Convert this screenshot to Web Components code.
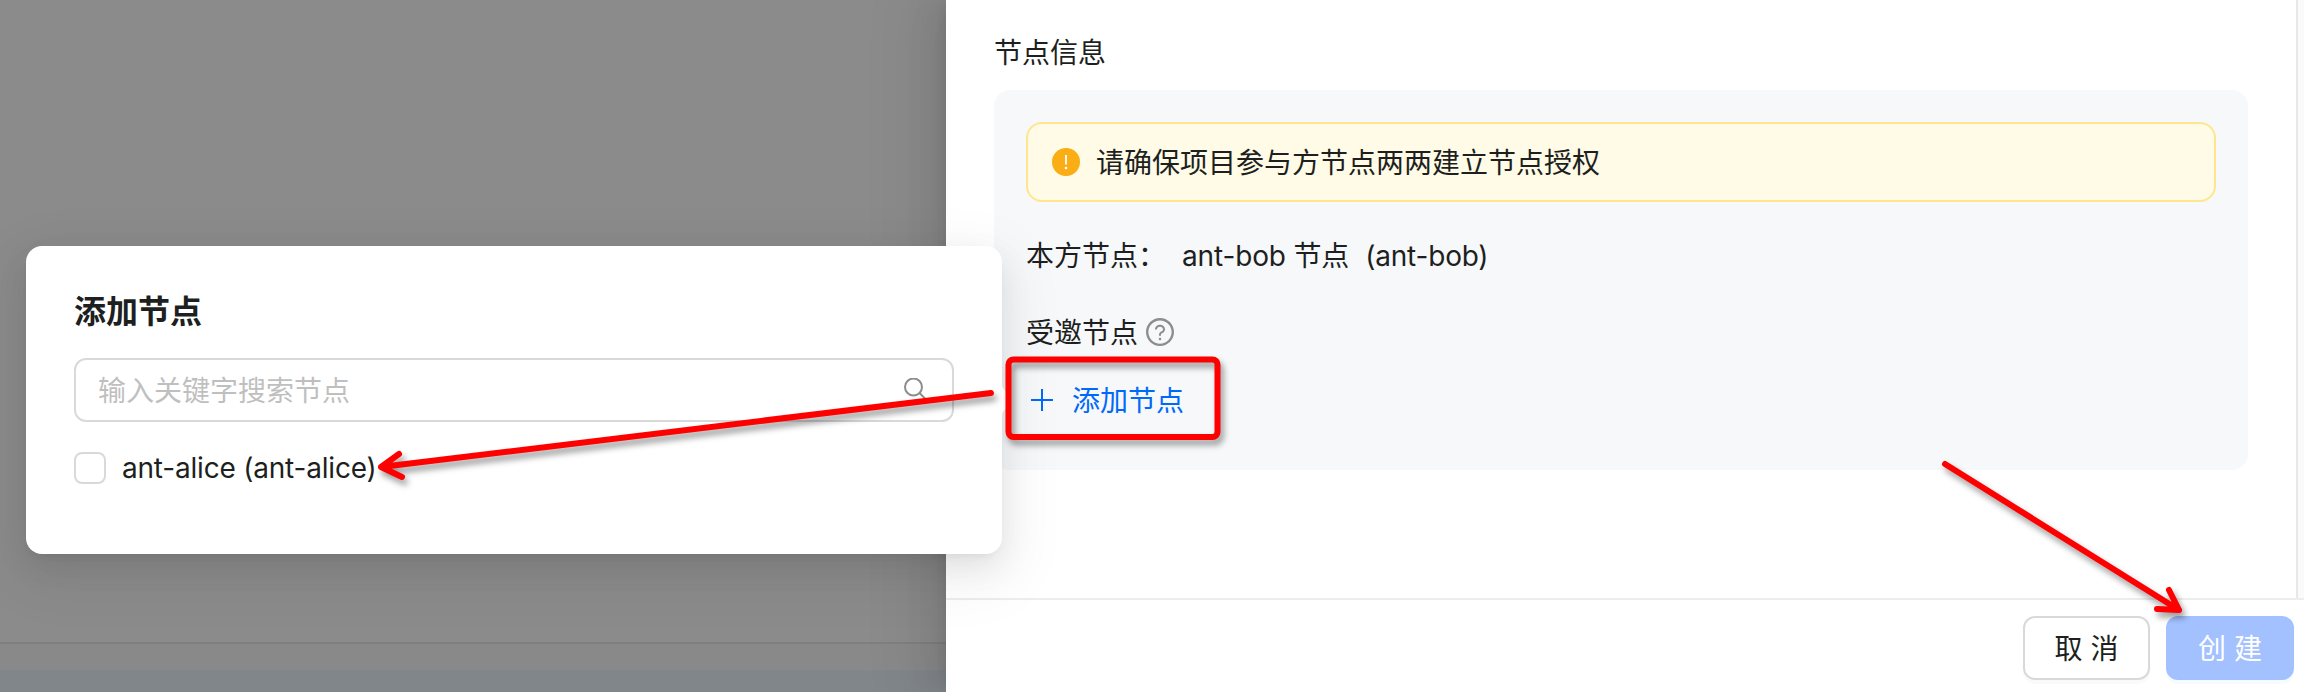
<!DOCTYPE html>
<html lang="zh-CN">
<head>
<meta charset="utf-8">
<title>节点信息</title>
<style>
html,body{margin:0;width:2304px;height:692px;overflow:hidden;background:#8b8b8b}
body{font:28px/44px Inter,"Noto Sans CJK SC",sans-serif;color:#1d1f21}
</style>
</head>
<body>
<project-page></project-page>
<script>
const define=(name,html)=>{
  const t=document.createElement('template');t.innerHTML=html;
  customElements.define(name,class extends HTMLElement{
    constructor(){super();this.attachShadow({mode:'open'}).append(t.content.cloneNode(true));}
  });
};

define('page-backdrop',`<style>
:host{display:flex;flex-direction:column;justify-content:flex-end;width:946px;height:692px;flex:none;background:#8b8b8b}
.rule{height:2px;background:#7f7f7f}.gap{height:26px;background:#898989}.band{height:22px;background:#80868a}
</style><div class="rule"></div><div class="gap"></div><div class="band"></div>`);

define('warn-alert',`<style>
:host{display:flex;align-items:center;box-sizing:border-box;height:80px;padding:0 24px;gap:16px;border:2px solid #ffe58f;border-radius:16px;background:#fffbe6}
svg{flex:none}
span{padding-top:2px}
</style>
<svg width="28" height="28" viewBox="0 0 28 28"><circle cx="14" cy="14" r="14" fill="#faad14"/><path d="M13.1 7h1.8v9.5h-1.8z" fill="#fff"/><circle cx="14" cy="20" r="1.3" fill="#fff"/></svg>
<span><slot></slot></span>`);

define('node-row',`<style>
:host{display:flex;align-items:center;height:44px}
</style><slot></slot>`);

define('help-icon',`<style>:host{display:block;width:28px;height:28px;margin:0 0 2px 8px}svg{display:block}</style>
<svg width="28" height="28" viewBox="64 64 896 896" fill="#8b8d8f"><path d="M512 64C264.600 64 64 264.600 64 512s200.600 448 448 448 448-200.600 448-448S759.400 64 512 64zm0 820c-205.400 0-372-166.600-372-372s166.600-372 372-372 372 166.600 372 372-166.600 372-372 372z"/><path d="M623.600 316.700C593.600 290.400 554 276 512 276s-81.600 14.500-111.600 40.700C369.200 344 352 380.700 352 420v7.600c0 4.400 3.600 8 8 8h48c4.400 0 8-3.600 8-8V420c0-44.100 43.100-80 96-80s96 35.900 96 80c0 31.100-22 59.600-56.100 72.700-21.200 8.100-39.200 22.300-52.100 40.900-13.100 19-19.900 41.800-19.900 64.900V620c0 4.400 3.600 8 8 8h48c4.400 0 8-3.600 8-8v-22.700a48.300 48.300 0 0 1 30.900-44.800c59-22.700 97.100-74.700 97.100-132.500.1-39.300-17.100-76-48.300-103.300zM472 732a40 40 0 1 0 80 0 40 40 0 1 0-80 0z"/></svg>`);

define('add-link',`<style>
:host{display:flex;align-items:center;height:44px;color:#0068fa;padding-left:4px;gap:18px}
svg{flex:none;margin-bottom:2px}
</style><svg width="24" height="24" viewBox="0 0 24 24"><path d="M12 1v22M1 12h22" stroke="currentColor" stroke-width="2"/></svg><span><slot></slot></span>`);

define('ui-button',`<style>
:host{display:flex;align-items:center;justify-content:center;box-sizing:border-box;width:127px;height:64px;border:2px solid #d9d9d9;border-radius:12px;background:#fff;box-shadow:0 4px 0 rgba(0,0,0,.02);padding-top:1px;white-space:pre}
:host([primary]){width:128px;border-color:#a3c1ff;background:#a3c1ff;color:#fff;box-shadow:0 4px 0 rgba(5,145,255,.04)}
</style><slot></slot>`);

define('node-drawer',`<style>
:host{display:flex;flex-direction:column;flex:1;height:692px;background:#fff;position:relative;box-shadow:-12px 0 32px rgba(0,0,0,.08),-6px 0 12px -8px rgba(0,0,0,.12),-18px 0 56px 16px rgba(0,0,0,.05)}
.main{display:flex;height:598px}
.body{flex:1;box-sizing:border-box;padding:31px 48px 0}
.scroll{width:6px;border-left:2px solid #e8e8e8;background:#fafafa}
.panel{box-sizing:border-box;height:380px;margin-top:15px;padding:32px;border-radius:16px;background:#f7f8fa}
.own{margin-top:32px}.invite{margin-top:33px}.add{margin-top:24px}
.label{width:156px}.val{letter-spacing:-.15px}.id{margin-left:16px;letter-spacing:-.2px}
footer{box-sizing:border-box;height:94px;border-top:2px solid #ededed;padding:16px 10px 0 0;display:flex;justify-content:flex-end;gap:16px}
</style>
<div class="main"><div class="body"><div>节点信息</div>
<div class="panel"><warn-alert>请确保项目参与方节点两两建立节点授权</warn-alert>
<node-row class="own"><span class="label">本方节点：</span><span class="val">ant-bob 节点</span><span class="id">(ant-bob)</span></node-row>
<node-row class="invite"><span>受邀节点</span><help-icon></help-icon></node-row>
<add-link class="add">添加节点</add-link></div></div><div class="scroll"></div></div>
<footer><ui-button>取 消</ui-button><ui-button primary>创 建</ui-button></footer>`);

define('search-box',`<style>
:host{display:flex;align-items:center;justify-content:space-between;box-sizing:border-box;height:64px;border:2px solid #d9d9d9;border-radius:12px;padding:0 24px 0 22px;color:#bfbfbf}
span{padding-top:1px}
</style><span><slot></slot></span>
<svg width="24" height="24" viewBox="0 0 24 24" fill="none" stroke="#8c8c8c" stroke-width="2"><circle cx="9.500" cy="9" r="8.500"/><path d="M15.500 15l6.500 6.500"/></svg>`);

define('check-item',`<style>
:host{display:flex;align-items:center;height:44px;gap:16px;letter-spacing:-.2px}
i{box-sizing:border-box;width:32px;height:32px;border:2px solid #d9d9d9;border-radius:8px;background:#fff}
</style><i></i><span><slot></slot></span>`);

define('node-popover',`<style>
:host{display:block;box-sizing:border-box;width:976px;height:308px;padding:42px 48px;border-radius:16px;background:#fff;box-shadow:0 12px 32px rgba(0,0,0,.08),0 6px 12px -8px rgba(0,0,0,.12),0 18px 56px 16px rgba(0,0,0,.05)}
h2{margin:0 0 22px;font-size:32px;line-height:48px;font-weight:600}
check-item{margin-top:24px}
</style><h2>添加节点</h2><search-box>输入关键字搜索节点</search-box><check-item>ant-alice (ant-alice)</check-item>`);

define('callout-marks',`<style>:host{display:block;pointer-events:none}svg{display:block}
.m{fill:none;stroke:#f00;stroke-width:6;stroke-linecap:round;stroke-linejoin:round;filter:drop-shadow(3px 5px 3px rgba(0,0,0,.4))}</style>
<svg width="2304" height="692" viewBox="0 0 2304 692">
<path d="M1002 386q2 5 6 6v16q-4 1-6 6z" fill="#fff"/>
<g class="m"><rect x="1008.500" y="359.500" width="209" height="77.500" rx="5"/>
<path d="M991 393L381 467M399 454L381 467L402 477"/>
<path d="M1945 464L2179 610M2169 590L2179 610L2157 609"/></g></svg>`);

define('project-page',`<style>
:host{display:flex;position:relative;width:2304px;height:692px;overflow:hidden}
node-popover{position:absolute;left:26px;top:246px}
callout-marks{position:absolute;left:0;top:0}
</style><page-backdrop></page-backdrop><node-drawer></node-drawer><node-popover></node-popover><callout-marks></callout-marks>`);
</script>
</body>
</html>
